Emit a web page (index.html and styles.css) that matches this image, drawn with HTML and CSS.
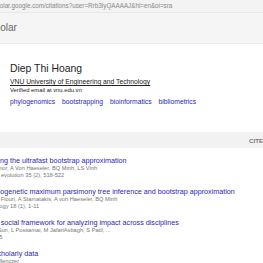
FILE: index.html
```html
<!DOCTYPE html>
<html>
<head>
<meta charset="utf-8">
<link rel="stylesheet" href="styles.css">
</head>
<body>
<div class="urlbar"><span class="url">scholar.google.com/citations?user=Rrb3IyQAAAAJ&amp;hl=en&amp;oi=sra</span></div>
<div class="header"><span class="brand">Scholar</span></div>
<div class="profile">
  <div class="name">Diep Thi Hoang</div>
  <div class="affil"><a>VNU University of Engineering and Technology</a></div>
  <div class="email">Verified email at vnu.edu.vn</div>
  <div class="topics"><a>phylogenomics</a><a>bootstrapping</a><a>bioinformatics</a><a>bibliometrics</a></div>
</div>
<div class="table">
  <div class="thead"><span class="th-title">TITLE</span><span class="th-cited">CITED BY</span></div>
  <div class="rows">
    <div class="row">
      <a class="title">UFBoot2: Improving the ultrafast bootstrap approximation</a>
      <div class="gray">DT Hoang, O Chernomor, A Von Haeseler, BQ Minh, LS Vinh</div>
      <div class="gray">Molecular biology and evolution 35 (2), 518-522</div>
    </div>
    <div class="row">
      <a class="title">MPBoot: fast phylogenetic maximum parsimony tree inference and bootstrap approximation</a>
      <div class="gray">DT Hoang, LS Vinh, T Flouri, A Stamatakis, A von Haeseler, BQ Minh</div>
      <div class="gray">BMC evolutionary biology 18 (1), 1-11</div>
    </div>
    <div class="row">
      <a class="title">Scholarometer: A social framework for analyzing impact across disciplines</a>
      <div class="gray">J Kaur, DT Hoang, X Sun, L Possamai, M JafariAsbagh, S Patil, ...</div>
      <div class="gray">PloS one 7 (9), e43235</div>
    </div>
    <div class="row">
      <a class="title">Crowdsourcing scholarly data</a>
      <div class="gray">DT Hoang, J Kaur, F Menczer</div>
      <div class="gray">&nbsp;</div>
    </div>
  </div>
</div>
</body>
</html>
```
FILE: styles.css
```css
html, body {
  margin: 0;
  padding: 0;
  width: 263px;
  height: 263px;
  overflow: hidden;
  background: #fff;
  font-family: "Liberation Sans", Arial, sans-serif;
}
a { text-decoration: none; }
.urlbar {
  height: 12px;
  background: #f3f3f3;
  border-bottom: 1px solid #e8e8e8;
  overflow: hidden;
  white-space: nowrap;
}
.url {
  display: block;
  margin-left: -10px;
  font-size: 6.27px;
  line-height: 12px;
  color: #888;
}
.header {
  height: 30px;
  background: #f5f5f5;
  border-bottom: 1px solid #ebebeb;
  overflow: hidden;
  white-space: nowrap;
}
.brand {
  display: block;
  margin-left: -17px;
  font-size: 10px;
  line-height: 30px;
  color: #666;
}
.profile {
  padding: 18px 0 0 10px;
  white-space: nowrap;
}
.name {
  font-size: 10.4px;
  line-height: 14px;
  color: #222;
}
.affil {
  margin-top: 2px;
  font-size: 6.75px;
  line-height: 8px;
}
.affil a {
  color: #222;
  text-decoration: underline;
}
.email {
  font-size: 5.85px;
  line-height: 8px;
  color: #222;
}
.topics {
  margin-top: 3px;
  font-size: 6.75px;
  line-height: 9px;
  display: flex;
  gap: 7px;
}
.topics a { color: #2a1fb8; }
.table {
  margin-top: 26px;
  margin-left: -56px;
  width: 420px;
  white-space: nowrap;
}
.thead {
  height: 16px;
  background: #f2f2f2;
  display: grid;
  grid-template-columns: 305px 1fr;
  align-items: center;
  font-size: 6.2px;
  font-weight: bold;
  color: #777;
}
.rows { padding-top: 4px; }
.row {
  padding: 4px 0;
}
.title {
  display: block;
  font-size: 7.2px;
  line-height: 9px;
  color: #2a1fb8;
}
.gray {
  font-size: 5.7px;
  line-height: 7px;
  color: #777;
}
```
